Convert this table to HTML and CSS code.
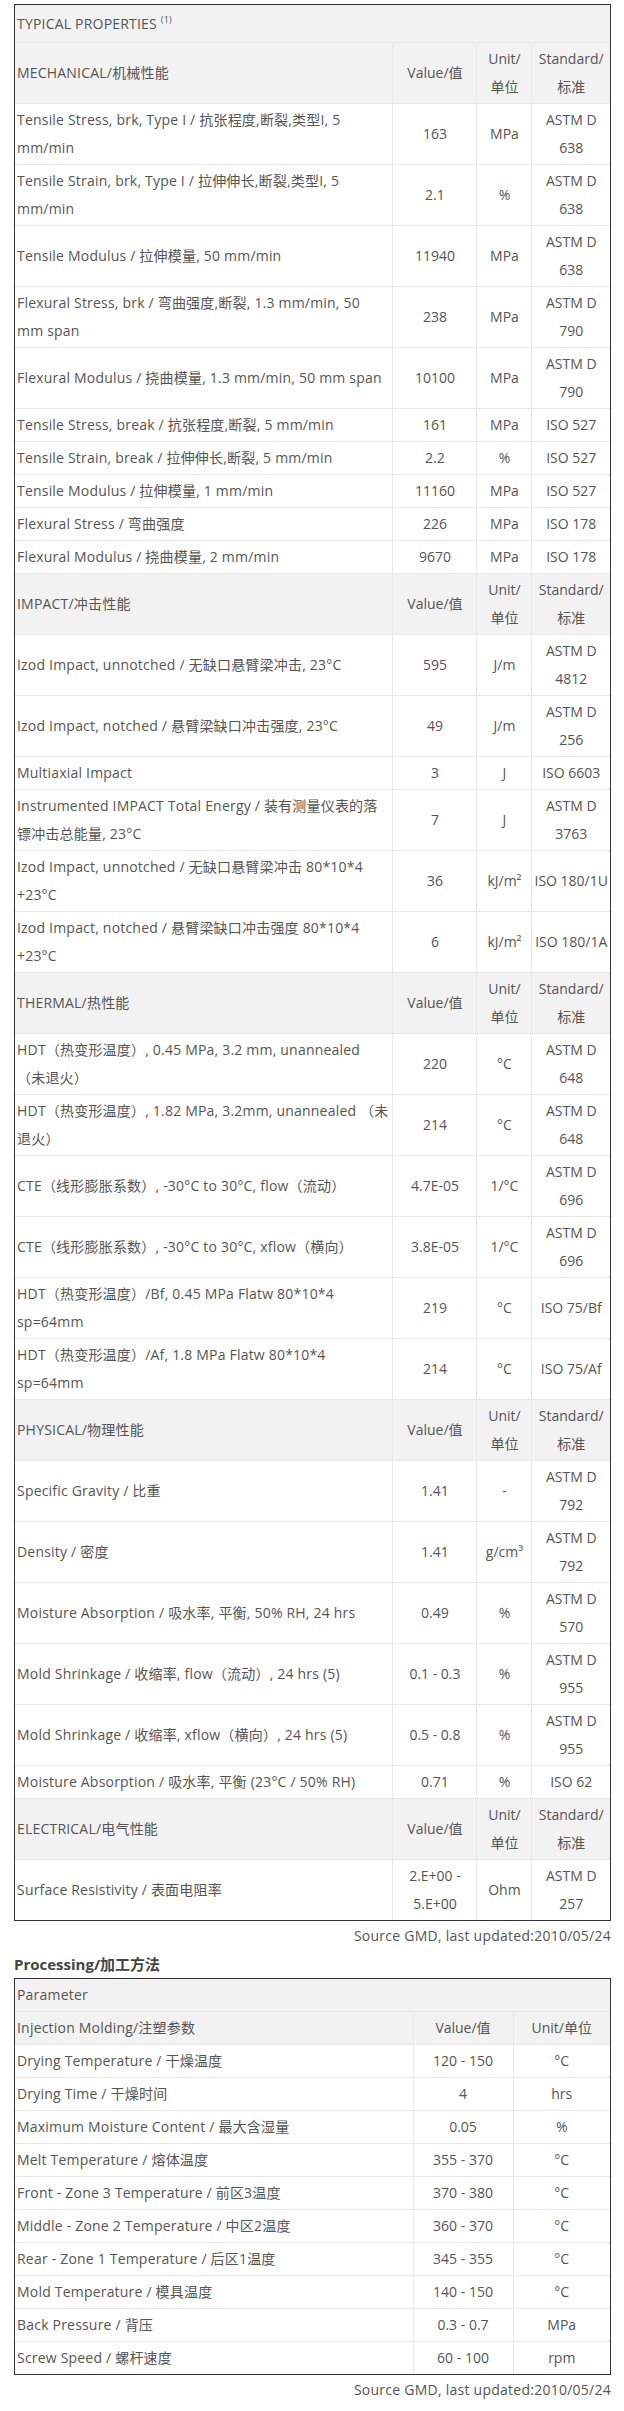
FILE: index.html
```html
<!doctype html>
<html lang="zh-CN">

<head>
    <meta charset="UTF-8">
    <meta name="viewport" content="width=device-width, initial-scale=1.0">
    <title>Typical Properties</title>
    <link rel="stylesheet" href="styles.css">
</head>

<body>
    <div class="wrap">
        <div class="tbl-box">
            <table class="props">
                <colgroup>
                    <col>
                    <col class="c-val">
                    <col class="c-unit">
                    <col class="c-std">
                </colgroup>
                <tr class="title">
                    <td colspan="4">TYPICAL PROPERTIES <sup>(1)</sup></td>
                </tr>
                <tr class="head">
                    <td>MECHANICAL/机械性能</td>
                    <td>Value/值</td>
                    <td>Unit/<br>单位</td>
                    <td>Standard/<br>标准</td>
                </tr>
                <tr><td>Tensile Stress, brk, Type I / 抗张程度,断裂,类型I, 5<br>mm/min</td><td>163</td><td>MPa</td><td>ASTM D<br>638</td></tr>
                <tr><td>Tensile Strain, brk, Type I / 拉伸伸长,断裂,类型I, 5<br>mm/min</td><td>2.1</td><td>%</td><td>ASTM D<br>638</td></tr>
                <tr><td>Tensile Modulus / 拉伸模量, 50 mm/min</td><td>11940</td><td>MPa</td><td>ASTM D<br>638</td></tr>
                <tr><td>Flexural Stress, brk / 弯曲强度,断裂, 1.3 mm/min, 50<br>mm span</td><td>238</td><td>MPa</td><td>ASTM D<br>790</td></tr>
                <tr><td>Flexural Modulus / 挠曲模量, 1.3 mm/min, 50 mm span</td><td>10100</td><td>MPa</td><td>ASTM D<br>790</td></tr>
                <tr><td>Tensile Stress, break / 抗张程度,断裂, 5 mm/min</td><td>161</td><td>MPa</td><td>ISO 527</td></tr>
                <tr><td>Tensile Strain, break / 拉伸伸长,断裂, 5 mm/min</td><td>2.2</td><td>%</td><td>ISO 527</td></tr>
                <tr><td>Tensile Modulus / 拉伸模量, 1 mm/min</td><td>11160</td><td>MPa</td><td>ISO 527</td></tr>
                <tr><td>Flexural Stress / 弯曲强度</td><td>226</td><td>MPa</td><td>ISO 178</td></tr>
                <tr><td>Flexural Modulus / 挠曲模量, 2 mm/min</td><td>9670</td><td>MPa</td><td>ISO 178</td></tr>
                <tr class="head">
                    <td>IMPACT/冲击性能</td>
                    <td>Value/值</td>
                    <td>Unit/<br>单位</td>
                    <td>Standard/<br>标准</td>
                </tr>
                <tr><td>Izod Impact, unnotched / 无缺口悬臂梁冲击, 23°C</td><td>595</td><td>J/m</td><td>ASTM D<br>4812</td></tr>
                <tr><td>Izod Impact, notched / 悬臂梁缺口冲击强度, 23°C</td><td>49</td><td>J/m</td><td>ASTM D<br>256</td></tr>
                <tr><td>Multiaxial Impact</td><td>3</td><td>J</td><td>ISO 6603</td></tr>
                <tr><td>Instrumented IMPACT Total Energy / 装有测量仪表的落<br>镖冲击总能量, 23°C</td><td>7</td><td>J</td><td>ASTM D<br>3763</td></tr>
                <tr><td>Izod Impact, unnotched / 无缺口悬臂梁冲击 80*10*4<br>+23°C</td><td>36</td><td>kJ/m²</td><td>ISO 180/1U</td></tr>
                <tr><td>Izod Impact, notched / 悬臂梁缺口冲击强度 80*10*4<br>+23°C</td><td>6</td><td>kJ/m²</td><td>ISO 180/1A</td></tr>
                <tr class="head">
                    <td>THERMAL/热性能</td>
                    <td>Value/值</td>
                    <td>Unit/<br>单位</td>
                    <td>Standard/<br>标准</td>
                </tr>
                <tr><td>HDT（热变形温度）, 0.45 MPa, 3.2 mm, unannealed<br>（未退火）</td><td>220</td><td>°C</td><td>ASTM D<br>648</td></tr>
                <tr><td>HDT（热变形温度）, 1.82 MPa, 3.2mm, unannealed （未<br>退火）</td><td>214</td><td>°C</td><td>ASTM D<br>648</td></tr>
                <tr><td>CTE（线形膨胀系数）, -30°C to 30°C, flow（流动）</td><td>4.7E-05</td><td>1/°C</td><td>ASTM D<br>696</td></tr>
                <tr><td>CTE（线形膨胀系数）, -30°C to 30°C, xflow（横向）</td><td>3.8E-05</td><td>1/°C</td><td>ASTM D<br>696</td></tr>
                <tr><td>HDT（热变形温度）/Bf, 0.45 MPa Flatw 80*10*4<br>sp=64mm</td><td>219</td><td>°C</td><td>ISO 75/Bf</td></tr>
                <tr><td>HDT（热变形温度）/Af, 1.8 MPa Flatw 80*10*4<br>sp=64mm</td><td>214</td><td>°C</td><td>ISO 75/Af</td></tr>
                <tr class="head">
                    <td>PHYSICAL/物理性能</td>
                    <td>Value/值</td>
                    <td>Unit/<br>单位</td>
                    <td>Standard/<br>标准</td>
                </tr>
                <tr><td>Specific Gravity / 比重</td><td>1.41</td><td>-</td><td>ASTM D<br>792</td></tr>
                <tr><td>Density / 密度</td><td>1.41</td><td>g/cm³</td><td>ASTM D<br>792</td></tr>
                <tr><td>Moisture Absorption / 吸水率, 平衡, 50% RH, 24 hrs</td><td>0.49</td><td>%</td><td>ASTM D<br>570</td></tr>
                <tr><td>Mold Shrinkage / 收缩率, flow（流动）, 24 hrs (5)</td><td>0.1 - 0.3</td><td>%</td><td>ASTM D<br>955</td></tr>
                <tr><td>Mold Shrinkage / 收缩率, xflow（横向）, 24 hrs (5)</td><td>0.5 - 0.8</td><td>%</td><td>ASTM D<br>955</td></tr>
                <tr><td>Moisture Absorption / 吸水率, 平衡 (23°C / 50% RH)</td><td>0.71</td><td>%</td><td>ISO 62</td></tr>
                <tr class="head">
                    <td>ELECTRICAL/电气性能</td>
                    <td>Value/值</td>
                    <td>Unit/<br>单位</td>
                    <td>Standard/<br>标准</td>
                </tr>
                <tr><td>Surface Resistivity / 表面电阻率</td><td>2.E+00 -<br>5.E+00</td><td>Ohm</td><td>ASTM D<br>257</td></tr>
            </table>
        </div>
        <p class="source">Source GMD, last updated:2010/05/24</p>

        <h3 class="sub-title">Processing/加工方法</h3>
        <div class="tbl-box">
            <table class="process">
                <colgroup>
                    <col>
                    <col class="c-val">
                    <col class="c-unit">
                </colgroup>
                <tr class="head">
                    <td colspan="3">Parameter</td>
                </tr>
                <tr class="head">
                    <td>Injection Molding/注塑参数</td>
                    <td>Value/值</td>
                    <td>Unit/单位</td>
                </tr>
                <tr><td>Drying Temperature / 干燥温度</td><td>120 - 150</td><td>°C</td></tr>
                <tr><td>Drying Time / 干燥时间</td><td>4</td><td>hrs</td></tr>
                <tr><td>Maximum Moisture Content / 最大含湿量</td><td>0.05</td><td>%</td></tr>
                <tr><td>Melt Temperature / 熔体温度</td><td>355 - 370</td><td>°C</td></tr>
                <tr><td>Front - Zone 3 Temperature / 前区3温度</td><td>370 - 380</td><td>°C</td></tr>
                <tr><td>Middle - Zone 2 Temperature / 中区2温度</td><td>360 - 370</td><td>°C</td></tr>
                <tr><td>Rear - Zone 1 Temperature / 后区1温度</td><td>345 - 355</td><td>°C</td></tr>
                <tr><td>Mold Temperature / 模具温度</td><td>140 - 150</td><td>°C</td></tr>
                <tr><td>Back Pressure / 背压</td><td>0.3 - 0.7</td><td>MPa</td></tr>
                <tr><td>Screw Speed / 螺杆速度</td><td>60 - 100</td><td>rpm</td></tr>
            </table>
        </div>
        <p class="source">Source GMD, last updated:2010/05/24</p>
    </div>
</body>

</html>
```

FILE: styles.css
```css
* {
    margin: 0;
    padding: 0;
}

body {
    font-family: "Open Sans", "Noto Sans CJK SC", sans-serif;
    color: #555;
    background: #fff;
}

.wrap {
    width: 597px;
    margin-left: 14px;
    padding: 4px 0 10px;
}

.tbl-box {
    border: 1px solid #333;
}

table {
    width: 100%;
    border-collapse: collapse;
    border-style: hidden;
    table-layout: fixed;
    font-size: 14px;
    line-height: 28px;
}

td {
    border: 1px solid #e8e8e8;
    padding: 2px 2px;
    text-align: center;
    vertical-align: middle;
    white-space: nowrap;
}

td:first-child {
    text-align: left;
    letter-spacing: 0.2px;
}

.props .c-val {
    width: 84px;
}

.props .c-unit {
    width: 55px;
}

.props .c-std {
    width: 78px;
}

.process .c-val {
    width: 100px;
}

.process .c-unit {
    width: 97px;
}

.title td,
.head td {
    background: #f2f2f2;
}

.title td {
    padding: 5px 2px 4px;
}

.title sup {
    font-size: 9px;
    line-height: 0;
    vertical-align: 6px;
}

.source {
    margin-top: 3px;
    font-size: 14px;
    line-height: 24px;
    letter-spacing: 0.25px;
    text-align: right;
}

.sub-title {
    margin: 5px 0 3px;
    font-size: 15px;
    line-height: 22px;
    font-weight: bold;
    color: #444;
}
```
